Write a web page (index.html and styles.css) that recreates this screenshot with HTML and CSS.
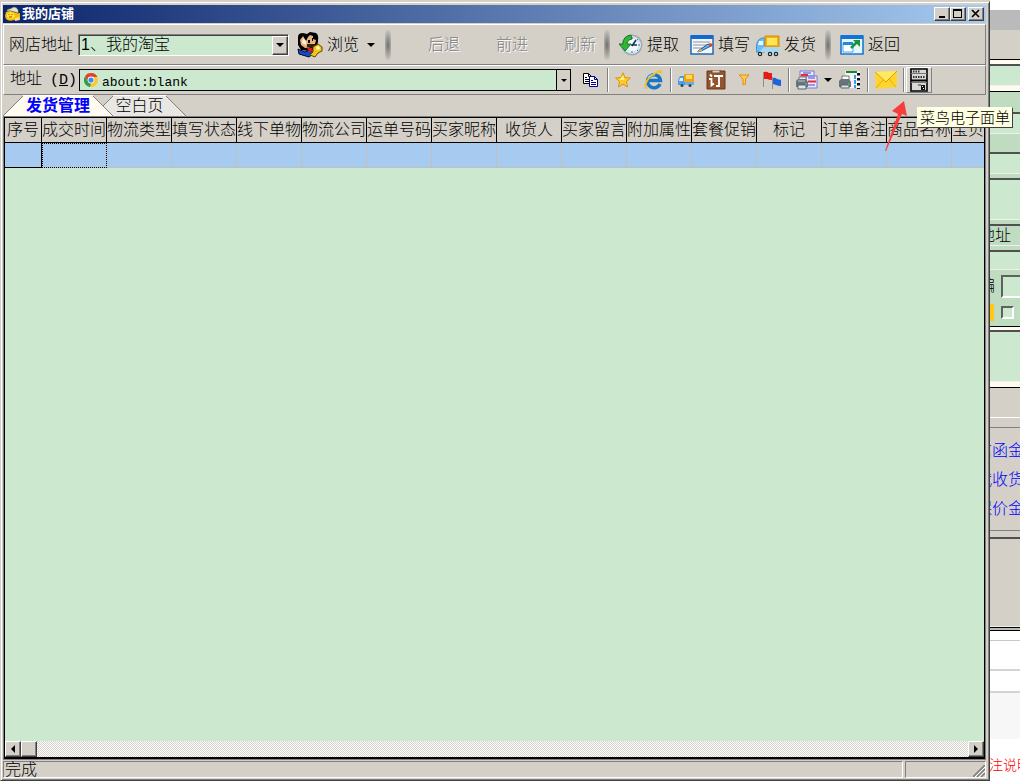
FILE: index.html
```html
<!DOCTYPE html>
<html lang="zh-CN">
<head>
<meta charset="utf-8">
<title>我的店铺</title>
<link rel="stylesheet" href="styles.css">
</head>
<body>
<main class="window">
  <header class="titlebar">
    <svg class="app-icon" width="16" height="16" viewBox="0 0 16 16"><path d="M1 6Q5 4 9 6Q12 8 15 7V13Q12 15 9 14Q4 16 1 13L0 10Z" fill="#f7b90c"/><path d="M2 5Q2 3 5 3L9 1Q14 2 13 7L10 6Q6 4 2 5" fill="#e9e4cf" stroke="#8f8a70" stroke-width=".6"/><path d="M2 8Q5 5 8 7Q11 9 9 12Q4 14 2 11Z" fill="#ffe62e"/><path d="M4 8v1M7 8v1M4 11h3" stroke="#8d5200"/><path d="M10 12L14 11L15 14L10 15Z" fill="#f4d98a"/></svg>
    <h1 class="title">我的店铺</h1>
    <button class="win-btn" aria-label="最小化"><svg width="10" height="10" viewBox="0 0 10 10"><path d="M2 7h6v2H2z"/></svg></button>
    <button class="win-btn" aria-label="最大化"><svg width="10" height="10" viewBox="0 0 10 10"><path d="M0 0h9v9H0zM1 2v6h7V2z" fill-rule="evenodd"/></svg></button>
    <button class="win-btn close" aria-label="关闭"><svg width="10" height="10" viewBox="0 0 10 10"><path d="M1 1l7 7M8 1l-7 7" stroke="#000" stroke-width="1.7"/></svg></button>
  </header>

  <nav class="toolbar main-bar" aria-label="常用">
    <label class="label" for="shop">网店地址</label>
    <span class="combo">
      <select id="shop" class="shop"><option>1、我的淘宝</option></select>
      <span class="combo-arrow"><i class="caret"></i></span>
    </span>
    <button class="tool browse"><svg width="26" height="26" viewBox="0 0 26 26"><path d="M1 5Q1 1 6 1L10 2L13 0L19 1Q22 3 21 9L20 17Q12 20 4 18L1 13Z"/><path d="M3 8L6 4L9 9L11 5L13 3L16 4L16 7L19 8L18 12L15 15L8 16L4 13Z" fill="#e8b482"/><path d="M6 6L9 9L9 13L5 11Z" fill="#fff0d6"/><path d="M11 8h2v3h-2zM15 6h1v3h-1z"/><path d="M10 12h8v3h-8z" fill="#3b1d0b"/><path d="M1 17L8 20L13 18L17 21L12 25L2 22Z" fill="#1549c9" stroke="#020929"/><path d="M10 16h5l1 3-4 1z" fill="#e31818"/><path d="M16 15L21 12L25 15L25 19L21 21L18 25L13 23L16 20Z" fill="#f1c51b" stroke="#604700"/><path d="M19 15l3-1 1 3-3 1z" fill="#fffbb4"/></svg><span>浏览</span><i class="caret"></i></button>
    <i class="bar-sep"></i>
    <button class="tool nav back" disabled>后退</button>
    <button class="tool nav" disabled>前进</button>
    <button class="tool nav refresh" disabled>刷新</button>
    <i class="bar-sep"></i>
    <button class="tool"><svg width="24" height="24" viewBox="0 0 24 24"><circle cx="13" cy="12" r="10.5" fill="#a3a9ab"/><circle cx="13" cy="12" r="9" fill="#cfe8f6"/><circle cx="13" cy="12" r="6.5" fill="#f4fbff"/><path d="M13 4v2M13 18v2M19 12h2M18 7l1-1M18 17l1 1" stroke="#5b6b74"/><path d="M13 13L17 7M12 12h6" stroke="#173850" stroke-width="1.6"/><path d="M12 2Q4 3 4 11H0L6 18L12 11H8Q8 7 13 6Z" fill="#35b43a" stroke="#127a24"/></svg><span>提取</span></button>
    <button class="tool"><svg width="24" height="24" viewBox="0 0 24 24"><path d="M1 3h22v18H1z" fill="#f2f8ff" stroke="#2268ba" stroke-width="1.5"/><path d="M1 2h22v4H1z" fill="#126ad0"/><path d="M3 9h17M3 12h14M3 15h10" stroke="#8c9299"/><path d="M8 18L18 11L21 13L11 18L8 19Z" fill="#62b9ed" stroke="#344f80"/><path d="M18 11l3-1 2 2-2 2z" fill="#d54729"/><path d="M8 18l3-2 1 2-4 1z" fill="#f0b53a"/></svg><span>填写</span></button>
    <button class="tool ship"><svg width="24" height="24" viewBox="0 0 24 24"><path d="M1 10Q2 6 6 5H9V19H0Z" fill="#72bbf2" stroke="#3890cf"/><path d="M3 8h4v4H2z" fill="#e7f8ff"/><path d="M9 3h14v11H9z" fill="#f0b116" stroke="#d48a0c"/><path d="M11 5h10v7H11z" fill="#ffe55a"/><path d="M8 14h15v5H3z" fill="#a4d8f7"/><g fill="#f4f8fb" stroke="#172330" stroke-width="1.300"><circle cx="4" cy="21" r="1.600"/><circle cx="14" cy="21" r="1.600"/><circle cx="20" cy="21" r="1.600"/></g></svg><span>发货</span></button>
    <i class="bar-sep late"></i>
    <button class="tool"><svg width="24" height="24" viewBox="0 0 24 24"><path d="M1 3h22v18H1z" fill="#e7f5ff" stroke="#1779d2" stroke-width="1.6"/><path d="M1 2h22v4H1z" fill="#1474d6"/><path d="M3 10h10v9H3z" fill="#fff" stroke="#5aa5e5"/><path d="M3 9h10v3H3z" fill="#2687df"/><path d="M11 15L17 9" stroke="#149632" stroke-width="2.5"/><path d="M13 7h7v7z" fill="#149632"/></svg><span>返回</span></button>
  </nav>

  <nav class="toolbar address-bar" aria-label="地址栏">
    <label class="label" for="url">地址<span class="key">(<u>D</u>)</span></label>
    <span class="url-box">
      <svg width="16" height="16" viewBox="0 0 16 16"><circle cx="8" cy="8" r="7" fill="#fbc92e"/><path d="M2 4.4A7 7 0 0 1 14.4 5H8L5 9Z" fill="#e24135"/><path d="M2 4.4L5.2 9.5L8 11L7 15A7 7 0 0 1 2 4.4" fill="#2a9d4f"/><circle cx="8" cy="8" r="3.4" fill="#fff"/><circle cx="8" cy="8" r="2.6" fill="#4486ed"/></svg>
      <input id="url" class="url" type="text" value="about:blank">
      <button class="url-arrow" aria-label="历史地址"><i class="caret small"></i></button>
    </span>
    <button class="icon-btn copy" aria-label="复制"><svg width="16" height="14" viewBox="0 0 16 14"><path d="M.5.5h5l3 3v7h-8z" fill="#fff" stroke="#000"/><path d="M5.5.5v3h3M2 4.5h2M2 6.5h5M2 8.5h5" stroke="#000" fill="none"/><path d="M6.500 3.500h5l3 3v7h-8z" fill="#fff" stroke="#000090"/><path d="M11.500 3.500v3h3M8 7.500h2M8 9.500h5M8 11.500h5" stroke="#000090" fill="none"/></svg></button>
    <i class="line-sep"></i>
    <button class="icon-btn" aria-label="收藏"><svg width="16" height="16" viewBox="0 0 16 16"><path d="M8 .8l2 4.700 5.400.5-4 3.700 1.200 5.300L8 12.200 3.400 15l1.200-5.300L.6 6 6 5.500z" fill="#ffc928" stroke="#d99512"/><path d="M8 3l1.500 5h-5z" fill="#fff080"/></svg></button>
    <button class="icon-btn ie" aria-label="浏览器"><svg width="20" height="20" viewBox="0 0 20 20"><path d="M17 14A6.500 6.500 0 1 1 17.500 10.500H6" fill="none" stroke="#1b75c5" stroke-width="3.4"/><path d="M5 8Q7 4 12 5" fill="none" stroke="#73c8f3" stroke-width="1.500"/><path d="M3 19Q-1 17 4 9Q12 0 18 0Q20 1 18 5Q18 2 14 3Q6 7 3 15Q2 18 6 17Q5 19 3 19" fill="#f3c12b"/></svg></button>
    <i class="line-sep"></i>
    <button class="icon-btn" aria-label="物流"><svg width="16" height="16" viewBox="0 0 16 16"><path d="M0 8L2 4H7v9H0z" fill="#4c9de3"/><path d="M2 6h3v3H1z" fill="#d9f2ff"/><path d="M6 2h10v8H6z" fill="#f2a11b"/><path d="M8 3h6v4H8z" fill="#ffd95b"/><path d="M7 10h9v3H7z" fill="#68afe4"/><g fill="#345"><circle cx="4" cy="13.500" r="1.500"/><circle cx="12" cy="13.500" r="1.500"/></g></svg></button>
    <button class="icon-btn order" aria-label="订单"><svg width="20" height="20" viewBox="0 0 20 20"><path d="M1 1h18v18H1z" fill="#93552f" stroke="#6e3618"/><path d="M6 0h8v3H6z" fill="#d9d0c5" stroke="#78543c"/><path d="M4 4.500l2 2M3 9h2.500v6.500l2.500-2M8 6h9M13 6v10h-3" fill="none" stroke="#fff" stroke-width="1.800"/></svg></button>
    <button class="icon-btn" aria-label="筛选"><svg width="12" height="12" viewBox="0 0 12 12"><path d="M1 1h10L7.500 5v5L5 11V5z" fill="#ffcf4a" stroke="#e78b13"/></svg></button>
    <button class="icon-btn flags" aria-label="旗帜"><svg width="20" height="18" viewBox="0 0 20 18"><path d="M1.500 1v15" stroke="#9d8a82"/><path d="M2 1Q5 0 7 2L10 2V9Q7 9 5 8L2 8Z" fill="#e31c19"/><path d="M10.500 6v12" stroke="#9d8a82"/><path d="M11 7Q13 6 15 8L19 9V15Q16 15 14 14L11 13Z" fill="#1d62df"/></svg></button>
    <i class="line-sep"></i>
    <button class="icon-btn print" aria-label="打印"><svg width="22" height="20" viewBox="0 0 22 20"><path d="M4 1h14v5H4zM10 6h11v12H10z" fill="#e9e9ff" stroke="#7777d8"/><path d="M7 3h8M12 8h7M12 15h7" stroke="#4848cf"/><path d="M5 5h7M12 11.500h8" stroke="#e52e39" stroke-width="2"/><path d="M3 7h7v4H3z" fill="#e8edf0" stroke="#777"/><path d="M0 11Q1 9 3 9H10L12 12V17H0Z" fill="#69737a"/><path d="M2 15h8v4H2z" fill="#dce4ea" stroke="#59636b"/><path d="M2 11h7" stroke="#b9c5cc"/><path d="M9 14h2" stroke="#50d550"/></svg><i class="caret"></i></button>
    <button class="icon-btn" aria-label="批量打印"><svg width="22" height="20" viewBox="0 0 22 20"><path d="M6 1h15v17H8z" fill="#f2f4f6"/><path d="M7 2h11" stroke="#128b28" stroke-width="2"/><path d="M19.500 3v16" stroke="#111" stroke-width="3" stroke-dasharray="2.500 2.500"/><path d="M16 5v13" stroke="#3f98ee" stroke-width="2" stroke-dasharray="4 1"/><path d="M3 6h7v5H3z" fill="#fff" stroke="#777"/><path d="M0 11Q1 9 3 9H10L12 12V17H0Z" fill="#69737a"/><path d="M2 15h8v3H2z" fill="#dce4ea" stroke="#59636b"/><path d="M9 14h2" stroke="#50d550"/></svg></button>
    <i class="line-sep"></i>
    <button class="icon-btn" aria-label="邮件"><svg width="22" height="18" viewBox="0 0 22 18"><path d="M0 1L22 0V16L1 18Z" fill="#ffd52b"/><path d="M0 1L11 11L22 0" fill="#ffe960" stroke="#df9b0c"/><path d="M1 17L8 9M21 16L14 8" stroke="#e7a916"/></svg></button>
    <i class="line-sep"></i>
    <button class="icon-btn pressed" aria-label="菜鸟电子面单" aria-describedby="tip"><svg width="18" height="24" viewBox="0 0 18 24"><path d="M1 1h16v22H1z" fill="#d8d8d4" stroke="#000" stroke-width="1.600"/><path d="M1 5.500h16" stroke="#777"/><path d="M1 12.500h16" stroke="#000" stroke-width="2"/><path d="M1 14.500h16" stroke="#777"/><path d="M3 3.500h7M3 9h12" stroke="#333" stroke-width="2" stroke-dasharray="1.500 1"/><path d="M11 17h4v5h-4z" fill="#111"/><path d="M12 18h1v1h-1zM13 20h1v1h-1z" fill="#fff"/><path d="M8 17h3" stroke="#333"/></svg></button>
  </nav>

  <div class="tabs" role="tablist">
    <button class="tab active" role="tab" aria-selected="true"><svg class="tab-shape" viewBox="0 0 110 21" preserveAspectRatio="none"><path d="M0 21L20 1H90L110 21Z" fill="#fffbf0"/><path d="M0 21L20 1" stroke="#808080"/><path d="M20 .5H90" stroke="#fff"/><path d="M90 1L110 21" stroke="#808080"/></svg><span>发货管理</span></button>
    <button class="tab" role="tab" aria-selected="false"><svg class="tab-shape" viewBox="0 0 93 21" preserveAspectRatio="none"><path d="M0 21L20 1H73L93 21Z" fill="#e9e7e3"/><path d="M0 21L20 1" stroke="#808080"/><path d="M20 .5H73" stroke="#fff"/><path d="M73 1L93 21" stroke="#808080"/></svg><span>空白页</span></button>
  </div>

  <section class="grid">
    <div class="grid-body">
      <table class="orders">
        <thead><tr><th class="num">序号</th><th>成交时间</th><th>物流类型</th><th>填写状态</th><th>线下单物</th><th>物流公司</th><th>运单号码</th><th>买家昵称</th><th>收货人</th><th>买家留言</th><th>附加属性</th><th>套餐促销</th><th>标记</th><th>订单备注</th><th>商品名称</th><th class="last">宝贝</th></tr></thead>
        <tbody><tr><td></td><td class="focus"></td><td></td><td></td><td></td><td></td><td></td><td></td><td></td><td></td><td></td><td></td><td></td><td></td><td></td><td class="last"></td></tr></tbody>
      </table>
    </div>
    <div class="scroll">
      <button class="scroll-btn" aria-label="向左"><svg width="6" height="8" viewBox="0 0 6 8"><path d="M5 0v8L1 4z"/></svg></button>
      <span class="thumb"></span>
      <button class="scroll-btn end" aria-label="向右"><svg width="6" height="8" viewBox="0 0 6 8"><path d="M1 0v8l4-4z"/></svg></button>
    </div>
  </section>

  <footer class="status">
    <span class="pane grow">完成</span>
    <span class="pane grip"><svg width="12" height="12" viewBox="0 0 12 12"><path d="M0 12L12 0M4 12L12 4M8 12L12 8" stroke="#808080" stroke-width="1.600"/><path d="M2 12L12 2M6 12L12 6" stroke="#fff"/></svg></span>
  </footer>
</main>

<aside class="behind">
  <div class="band h10 white"></div>
  <div class="band h20 shade"></div>
  <div class="band h30 face ruled-low"></div>
  <div class="band h4 ivory"></div>
  <div class="band h22 mint sunken"></div>
  <div class="band h6 ivory ink-low"></div>
  <div class="band h20 sage"></div>
  <div class="band h22 mint sunken"></div>
  <div class="band h18 sage"></div>
  <div class="band h22 mint sunken"></div>
  <div class="band h4 sage"></div>
  <div class="band h42 mint sunken"></div>
  <div class="band h4 sage"></div>
  <div class="band h22 sage sunken"><span class="addr">地址</span></div>
  <div class="band h4 sage"></div>
  <div class="band h20 mint sunken"></div>
  <div class="band h56 sage form">
    <label class="form-row"><span class="zip">邮编</span><input class="zip-box" type="text"></label>
    <label class="form-row"><span class="folder"></span><input class="check" type="checkbox" aria-label="选择"></label>
  </div>
  <div class="band h4 ivory ink-top"></div>
  <div class="band h52 mint sunken"></div>
  <div class="band h6 ivory ink-low"></div>
  <div class="band h30 face white-low"></div>
  <div class="band h10 face gray-low"></div>
  <div class="band links face gray-low"><a href="#">信函金</a><a href="#">代收货</a><a href="#">保价金</a></div>
  <div class="band h6 face"></div>
  <div class="band h90 face sunken"></div>
  <div class="band h4 shade ink-top ink-low"></div>
  <div class="band h10 white soft-low"></div>
  <div class="band h30 white rule"></div>
  <div class="band h22 white rule"></div>
  <div class="band h46 pale"></div>
  <div class="band rest white"><span class="note">备注说明</span></div>
</aside>

<svg class="arrow" width="26" height="54" viewBox="0 0 26 54"><path d="M0 51L13 14L7 11L19 1L22 16L17 14L1 51Z" fill="#f83e3b"/></svg>
<div class="tip" id="tip" role="tooltip">菜鸟电子面单</div>
</body>
</html>
```
FILE: styles.css
```css
* { box-sizing: border-box; }
body {
  margin: 0;
  height: 100vh;
  display: flex;
  overflow: hidden;
  position: relative;
  background: #d4d0c8;
  color: #000;
  font: 300 16px/20px "Liberation Sans", "Noto Sans CJK SC", sans-serif;
}
button, input, select {
  font: inherit;
  color: inherit;
  border: 0;
  padding: 0;
  margin: 0;
  background: none;
  border-radius: 0;
}
svg { display: block; flex: none; fill: #000; }
svg path[stroke]:not([fill]) { fill: none; }

.window {
  flex: 1;
  min-width: 0;
  margin-top: 1px;
  display: flex;
  flex-direction: column;
  padding: 3px 3px 2px 2px;
  background: #d4d0c8;
  border: 1px solid;
  border-color: #d4d0c8 #404040 #404040 #d4d0c8;
  box-shadow: inset 1px 1px #fff, inset -1px -1px #808080;
}
.titlebar {
  display: flex;
  align-items: center;
  height: 18px;
  margin-bottom: 1px;
  padding: 0 2px;
  background: linear-gradient(90deg, #0a246a, #a6caf0);
}
.title {
  flex: 1;
  margin: 0 0 0 1px;
  color: #fff;
  font-size: 13px;
  line-height: 18px;
  font-weight: 700;
}
.win-btn, .combo-arrow, .scroll-btn, .thumb {
  display: flex;
  align-items: center;
  justify-content: center;
  background: #d4d0c8;
  border: 1px solid;
  border-color: #fff #404040 #404040 #fff;
  box-shadow: inset -1px -1px #808080;
}
.win-btn { width: 16px; height: 14px; }
.close { margin-left: 2px; }

.toolbar {
  display: flex;
  align-items: center;
  white-space: nowrap;
  border: 1px solid;
  border-color: #fff #808080 #808080 #fff;
}
.main-bar { height: 41px; padding-left: 5px; }
.address-bar { height: 30px; padding: 0 53px 0 6px; }
.label { flex: none; width: 69px; }
.key {
  margin-left: 8px;
  font: 15px/20px "Liberation Mono", monospace;
}
.caret {
  border: 4px solid transparent;
  border-top-color: #000;
  border-bottom: 0;
}
.caret.small { border-width: 3px; border-bottom: 0; }
.combo { position: relative; flex: none; width: 211px; height: 22px; }
.shop {
  width: 100%;
  height: 100%;
  padding: 0 0 2px 2px;
  appearance: none;
  background: #cce8cf;
  border: 1px solid;
  border-color: #808080 #fff #fff #808080;
  box-shadow: inset 1px 1px #404040;
}
.combo-arrow { position: absolute; top: 2px; right: 1px; bottom: 1px; width: 16px; pointer-events: none; }
.tool { display: flex; align-items: center; gap: 4px; flex: none; margin-right: 11px; }
.browse { margin: 0 10px 0 8px; }
.browse .caret { margin-left: 4px; }
.nav { margin-right: 36px; color: #808080; text-shadow: 1px 1px #fff; }
.nav.back { margin-left: 28px; }
.nav.refresh { margin-right: 8px; }
.tool:nth-of-type(6) { margin-right: 6px; }
.bar-sep {
  flex: none;
  width: 6px;
  height: 30px;
  margin-right: 9px;
  background: radial-gradient(ellipse 5px 17px, #707070, #d4d0c8);
}
.late { margin-left: -2px; }

.url-box {
  flex: 1;
  min-width: 0;
  display: flex;
  align-items: center;
  height: 22px;
  padding-left: 3px;
  background: #cce8cf;
  border: 1px solid #000;
}
.url {
  flex: 1;
  min-width: 0;
  height: 20px;
  padding: 4px 0 0 3px;
  font: 13px/16px "Liberation Mono", monospace;
}
.url-arrow {
  display: flex;
  align-items: center;
  justify-content: center;
  width: 14px;
  height: 20px;
  background: #d4d0c8;
  border-left: 1px solid #000;
}
.icon-btn { display: flex; align-items: center; flex: none; margin: 0 6px; }
.icon-btn.copy { margin: 0 8px 0 12px; }
.icon-btn.ie { margin-right: 7px; }
.icon-btn.print { gap: 6px; margin-right: 1px; }
.icon-btn.pressed {
  margin: 0 0 0 1px;
  height: 26px;
  padding: 0 3px;
  background: #d8d5ce;
  border: 1px solid;
  border-color: #fff #808080 #808080 #fff;
}
.line-sep {
  flex: none;
  width: 2px;
  height: 24px;
  border-left: 1px solid #808080;
  border-right: 1px solid #fff;
}

.tabs { display: flex; height: 21px; }
.tab {
  position: relative;
  width: 93px;
  margin-left: -20px;
  height: 21px;
  padding-top: 1px;
}
.tab span { position: relative; }
.tab-shape { position: absolute; inset: 0; width: 100%; height: 100%; }
.tab.active {
  z-index: 1;
  width: 110px;
  margin-left: 0;
  color: #0000ff;
  font-weight: 700;
}

.grid {
  flex: 1;
  min-height: 0;
  margin: 1px 1px 2px;
  display: flex;
  flex-direction: column;
  border: 1px solid #000;
  border-bottom-width: 2px;
  outline: 1px solid #808080;
}
.grid-body { flex: 1; min-height: 0; overflow: hidden; background: #cce8cf; }
.orders { width: 100%; table-layout: fixed; border-collapse: separate; border-spacing: 0; }
.orders th {
  width: 65px;
  height: 25px;
  padding: 0;
  white-space: nowrap;
  font-weight: 300;
  background: #d4d0c8;
  border-right: 1px solid #000;
  border-bottom: 1px solid #000;
}
.orders .num { width: 37px; }
.orders td {
  height: 25px;
  padding: 0;
  background: #a6caf0;
  border-right: 1px solid #c0c0c0;
  border-bottom: 1px solid #c0c0c0;
}
.orders td:first-child { border-color: #000; }
.orders .last { width: auto; border-right: 0; text-align: left; }
.orders .focus { outline: 1px dotted #000; outline-offset: -1px; }
.scroll {
  display: flex;
  height: 16px;
  background: repeating-conic-gradient(#fff 0 25%, #d4d0c8 0 50%) 0 0 / 2px 2px;
}
.scroll-btn, .thumb { width: 16px; height: 16px; }
.end { margin-left: auto; }

.status { display: flex; gap: 2px; height: 17px; }
.pane {
  border: 1px solid;
  border-color: #808080 #fff #fff #808080;
  line-height: 15px;
  padding-left: 1px;
}
.grow { flex: 1; }
.grip { width: 81px; display: flex; justify-content: flex-end; align-items: flex-end; }

.behind {
  flex: none;
  width: 30px;
  display: flex;
  flex-direction: column;
  overflow: hidden;
  white-space: nowrap;
}
.band { flex: none; overflow: hidden; }
.h4 { height: 4px; }
.h6 { height: 6px; }
.h10 { height: 10px; }
.h18 { height: 18px; }
.h20 { height: 20px; }
.h22 { height: 22px; }
.h30 { height: 30px; }
.h42 { height: 42px; }
.h46 { height: 46px; }
.h52 { height: 52px; }
.h56 { height: 56px; }
.h90 { height: 90px; }
.white { background: #fff; }
.shade { background: #bababa; }
.face { background: #d4d0c8; }
.ivory { background: #fffbf0; }
.mint { background: #cce8cf; }
.sage { background: #c0dcc0; }
.pale { background: #f7f7f7; }
.sunken { border-top: 2px solid #505050; border-bottom: 1px solid #f2f0ea; }
.ruled-low, .ink-low { border-bottom: 1px solid #000; }
.ink-top { border-top: 1px solid #000; }
.white-low { border-bottom: 1px solid #fff; }
.gray-low { border-bottom: 1px solid #808080; }
.soft-low { border-bottom: 1px solid #c8c8c8; }
.rule { border-bottom: 2px solid #d4d4d4; }
.addr { display: block; margin-left: -11px; }
.form { padding-top: 4px; }
.form-row { display: flex; align-items: center; gap: 6px; height: 24px; }
.zip { margin-left: -27px; }
.zip-box {
  flex: none;
  width: 60px;
  height: 23px;
  background: #cce8cf;
  border: 2px solid;
  border-color: #606060 #fff #fff #606060;
}
.form-row + .form-row { margin-top: 2px; gap: 7px; }
.folder { width: 4px; height: 17px; background: #ffc814; }
.check {
  appearance: none;
  width: 13px;
  height: 13px;
  background: #cce8cf;
  border: 2px solid;
  border-color: #606060 #fff #fff #606060;
}
.links { display: flex; flex-direction: column; gap: 9px; height: 103px; padding-top: 13px; }
.links a { margin-left: -14px; color: #0000ff; text-decoration: none; }
.rest { flex: 1; padding-top: 16px; }
.note { display: block; margin-left: -15px; color: #f00; font-size: 14px; }

.arrow { position: absolute; left: 885px; top: 100px; }
.tip {
  position: absolute;
  right: 7px;
  top: 107px;
  height: 21px;
  padding: 0 2px;
  font-size: 15px;
  line-height: 19px;
  background: #ffffe1;
  border: 1px solid;
  border-color: #fffff0 #404040 #404040 #fffff0;
}
```
